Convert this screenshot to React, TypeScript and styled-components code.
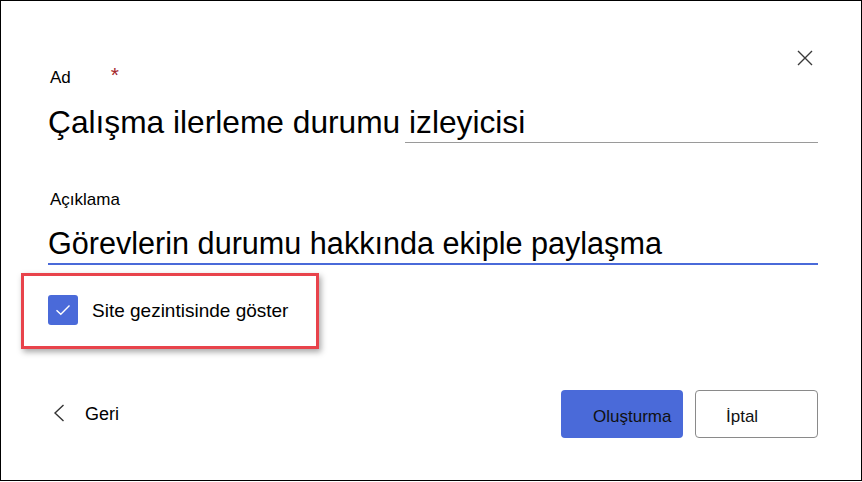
import React from 'react'
import styled, { createGlobalStyle } from 'styled-components'

const GlobalStyle = createGlobalStyle`
  html, body {
    margin: 0;
    padding: 0;
    background: #fff;
  }
  body {
    font-family: "Liberation Sans", Arial, sans-serif;
    color: #000;
  }
`

function App() {
  return (
    <>
      <GlobalStyle />
      <Dialog>
        <CloseButton aria-label="Kapat">
          <svg width="16" height="16" viewBox="0 0 16 16">
            <path d="M1 1 L15 15 M15 1 L1 15" stroke="#3a3a3a" strokeWidth="1.4" fill="none" />
          </svg>
        </CloseButton>

        <Label>
          Ad<Required>*</Required>
        </Label>
        <TitleValue>Çalışma ilerleme durumu izleyicisi</TitleValue>
        <Underline />

        <Label $top={47}>Açıklama</Label>
        <DescValue>Görevlerin durumu hakkında ekiple paylaşma</DescValue>

        <Highlight>
          <CheckRow>
            <CheckBox>
              <svg width="16" height="12" viewBox="0 0 16 12">
                <path d="M1.5 6.2 L5.8 10.3 L14.5 1.6" stroke="#fff" strokeWidth="1.4" fill="none" />
              </svg>
            </CheckBox>
            <CheckText>Site gezintisinde göster</CheckText>
          </CheckRow>
        </Highlight>

        <Footer>
          <BackLink>
            <svg width="12" height="18" viewBox="0 0 12 18">
              <path d="M10.5 1 L2 9 L10.5 17" stroke="#333" strokeWidth="1.4" fill="none" />
            </svg>
            <span>Geri</span>
          </BackLink>
          <Actions>
            <Button $primary>Oluşturma</Button>
            <Button>İptal</Button>
          </Actions>
        </Footer>
      </Dialog>
    </>
  )
}

export default App

const Dialog = styled.div`
  position: relative;
  box-sizing: border-box;
  width: 862px;
  height: 481px;
  border: 1px solid #000;
  padding: 65px 43px 0 47px;
  display: flex;
  flex-direction: column;
`

const CloseButton = styled.div`
  position: absolute;
  top: 49px;
  right: 48px;
  width: 16px;
  height: 16px;
  display: flex;
`

const Label = styled.div<{ $top?: number }>`
  margin-top: ${(p) => p.$top ?? 0}px;
  font-size: 17px;
  line-height: 20px;
  height: 20px;
  padding-left: 2px;
`

const Required = styled.span`
  color: #a4262c;
  font-size: 21px;
  margin-left: 40px;
  position: relative;
  top: -1px;
`

const TitleValue = styled.div`
  margin-top: 16px;
  font-size: 31.7px;
  line-height: 40px;
  height: 40px;
  white-space: nowrap;
`

const Underline = styled.div`
  margin-left: 357px;
  height: 1px;
  background: #9a9a9a;
`

const DescValue = styled.div`
  margin-top: 13px;
  font-size: 30.6px;
  line-height: 40px;
  height: 40px;
  white-space: nowrap;
  border-bottom: 2px solid #4a6ad9;
`

const Highlight = styled.div`
  box-sizing: border-box;
  margin: 8px 0 0 -27px;
  width: 298px;
  height: 76px;
  border: 3px solid #e8434b;
  box-shadow: 2px 3px 6px rgba(0, 0, 0, 0.35);
  padding: 18px 0 0 24px;
`

const CheckRow = styled.div`
  display: flex;
  align-items: center;
  gap: 14px;
`

const CheckBox = styled.div`
  width: 30px;
  height: 30px;
  border-radius: 3px;
  background: #4a6ad9;
  display: flex;
  align-items: center;
  justify-content: center;
`

const CheckText = styled.span`
  font-size: 19px;
  line-height: 30px;
  padding-top: 2px;
`

const Footer = styled.div`
  margin-top: 41px;
  height: 48px;
  display: flex;
  align-items: center;
  justify-content: space-between;
`

const BackLink = styled.div`
  display: flex;
  align-items: center;
  padding-left: 5px;
  gap: 20px;
  font-size: 18px;
  line-height: 48px;

  svg {
    margin-top: -2px;
  }
`

const Actions = styled.div`
  display: flex;
  gap: 12px;
`

const Button = styled.div<{ $primary?: boolean }>`
  box-sizing: border-box;
  width: ${(p) => (p.$primary ? 122 : 123)}px;
  height: 48px;
  border-radius: 4px;
  display: flex;
  align-items: center;
  padding: 5px 0 0 ${(p) => (p.$primary ? 32 : 30)}px;
  font-size: 17px;
  color: #111;
  background: ${(p) => (p.$primary ? '#4a6ad9' : '#fff')};
  border: ${(p) => (p.$primary ? 'none' : '1px solid #8a8a8a')};
`
